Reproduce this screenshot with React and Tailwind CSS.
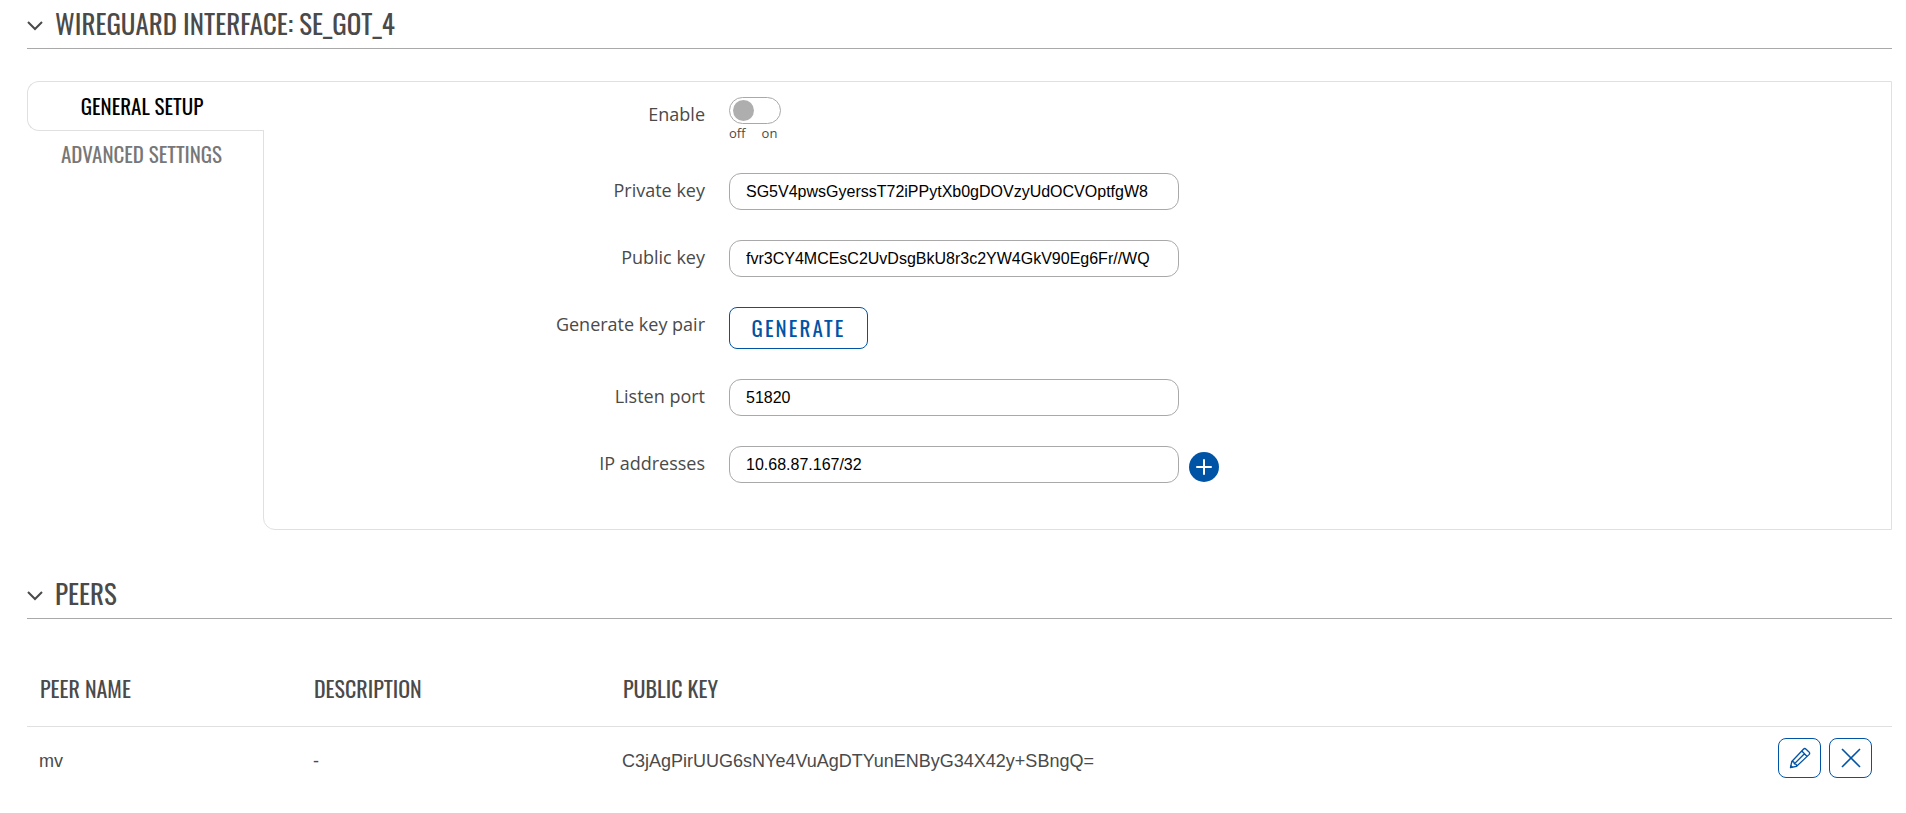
import { useState } from 'react'

const DISPLAY = "font-['Oswald','Roboto_Condensed','Liberation_Sans_Narrow',sans-serif]"

const peers = [
  { name: 'mv', description: '-', publicKey: 'C3jAgPirUUG6sNYe4VuAgDTYunENByG34X42y+SBngQ=' },
]

function ChevronIcon() {
  return (
    <svg className="mt-1.5" width="16" height="10" viewBox="0 0 16 10" fill="none" stroke="currentColor" strokeWidth="2" aria-hidden="true">
      <path d="M1 1l7 7 7-7" />
    </svg>
  )
}

function PencilIcon() {
  return (
    <svg width="22" height="22" viewBox="0 0 22 22" fill="none" stroke="currentColor" strokeWidth="1.3" strokeLinejoin="round" aria-hidden="true">
      <path d="M1.5 20.5l1.3-6L14.4 2.2q1.3-1.3 2.7 0l2.9 2.7q1.3 1.3 0 2.7L7.6 19.3z" />
      <path d="M2.8 14.5l2 .4.5 2 1.9.4.4 2M12.8 4l5.3 5.5M5.3 16.9L15.4 6.7M1.6 18.4l2 2" />
    </svg>
  )
}

function CloseIcon() {
  return (
    <svg width="20" height="20" viewBox="0 0 20 20" fill="none" stroke="currentColor" strokeWidth="1.6" aria-hidden="true">
      <path d="M1 1l18 18M19 1L1 19" />
    </svg>
  )
}

function SectionTitle({ children }) {
  return (
    <h2 className={`${DISPLAY} flex h-[49px] items-center gap-3 border-b border-[#a9a9a9] pb-0.5 text-[27px] leading-10 uppercase`}>
      <ChevronIcon />
      {children}
    </h2>
  )
}

function Row({ label, htmlFor, children }) {
  return (
    <div className="flex gap-6">
      <label htmlFor={htmlFor} className="w-[441px] shrink-0 pt-[3px] text-right text-lg">{label}</label>
      <div className="flex items-center gap-2.5">{children}</div>
    </div>
  )
}

function TextInput(props) {
  return (
    <input
      type="text"
      className="h-[37px] w-[450px] rounded-xl border border-[#a9a9a9] bg-white px-4 font-['Liberation_Sans',Arial,sans-serif] text-base text-black"
      {...props}
    />
  )
}

export default function App() {
  const [enabled, setEnabled] = useState(false)
  const [form, setForm] = useState({
    privateKey: 'SG5V4pwsGyerssT72iPPytXb0gDOVzyUdOCVOptfgW8',
    publicKey: 'fvr3CY4MCEsC2UvDsgBkU8r3c2YW4GkV90Eg6Fr//WQ',
    port: '51820',
    address: '10.68.87.167/32',
  })
  const update = (field) => (e) => setForm({ ...form, [field]: e.target.value })

  return (
    <main className="bg-white pr-3.5 pl-[27px] font-['Open_Sans','Noto_Sans',sans-serif] text-[#4a4a4a]">
      <section>
        <SectionTitle>Wireguard interface: SE_GOT_4</SectionTitle>
        <div className="mt-8 flex">
          <nav className={`${DISPLAY} z-10 -mr-px w-[237px] shrink-0 text-[21px] uppercase`}>
            <button type="button" className="block h-[50px] w-full rounded-l-xl border border-r-0 border-[#e0e0e0] bg-white pr-2 text-black uppercase">General setup</button>
            <button type="button" className="block h-12 w-full pr-2 pb-0.5 text-[#777] uppercase">Advanced settings</button>
          </nav>
          <div className="flex h-[449px] grow flex-col gap-[30px] rounded-bl-xl border border-[#e0e0e0] pt-[15px]">
            <Row label="Enable" htmlFor="enable">
              <div className="h-[46px]">
                <input id="enable" type="checkbox" role="switch" checked={enabled} onChange={e => setEnabled(e.target.checked)}
                  className="block h-[27px] w-13 appearance-none rounded-full border border-[#a9a9a9] p-0.5 pl-[3px] before:block before:size-[21px] before:rounded-full before:bg-[#aeaeae] checked:before:ml-6 checked:before:bg-[#0054a6]" />
                <div className="flex gap-4 text-[13px] leading-[18px]"><span>off</span><span>on</span></div>
              </div>
            </Row>
            <Row label="Private key" htmlFor="private">
              <TextInput id="private" value={form.privateKey} onChange={update('privateKey')} />
            </Row>
            <Row label="Public key" htmlFor="public">
              <TextInput id="public" value={form.publicKey} onChange={update('publicKey')} />
            </Row>
            <Row label="Generate key pair" htmlFor="generate">
              <button id="generate" type="button" className={`${DISPLAY} h-[42px] w-[139px] rounded-lg border border-[#0054a6] text-[21px] tracking-widest text-[#0054a6] uppercase`}>Generate</button>
            </Row>
            <Row label="Listen port" htmlFor="port">
              <TextInput id="port" value={form.port} onChange={update('port')} />
            </Row>
            <Row label="IP addresses" htmlFor="address">
              <TextInput id="address" value={form.address} onChange={update('address')} />
              <button type="button" aria-label="Add address" className="mt-1 flex size-[30px] items-center justify-center rounded-full bg-[#0054a6] text-white">
                <svg width="16" height="16" viewBox="0 0 16 16" fill="none" stroke="currentColor" strokeWidth="2" strokeLinecap="round" aria-hidden="true">
                  <path d="M8 1v14M1 8h14" />
                </svg>
              </button>
            </Row>
          </div>
        </div>
      </section>

      <section className="mt-10">
        <SectionTitle>Peers</SectionTitle>
        <table className="mt-8 w-full table-fixed text-left">
          <thead className={`${DISPLAY} text-[22px] uppercase`}>
            <tr className="h-[75px] border-b border-[#e0e0e0]">
              <th className="w-[274px] pl-[13px] font-normal">Peer name</th>
              <th className="w-[309px] pl-[13px] font-normal">Description</th>
              <th className="pl-[13px] font-normal">Public key</th>
              <th className="w-[200px]"></th>
            </tr>
          </thead>
          <tbody className="font-['Liberation_Sans',Arial,sans-serif] text-lg">
            {peers.map(peer => (
              <tr key={peer.name} className="h-16">
                <td className="pt-1.5 pl-3">{peer.name}</td>
                <td className="pt-1.5 pl-3">{peer.description}</td>
                <td className="pt-1.5 pl-3">{peer.publicKey}</td>
                <td className="pr-5">
                  <div className="flex justify-end gap-2 text-[#0054a6]">
                    <button type="button" aria-label="Edit" className="flex h-10 w-[43px] items-center justify-center rounded-lg border border-current"><PencilIcon /></button>
                    <button type="button" aria-label="Delete" className="flex h-10 w-[43px] items-center justify-center rounded-lg border border-current"><CloseIcon /></button>
                  </div>
                </td>
              </tr>
            ))}
          </tbody>
        </table>
      </section>
    </main>
  )
}
